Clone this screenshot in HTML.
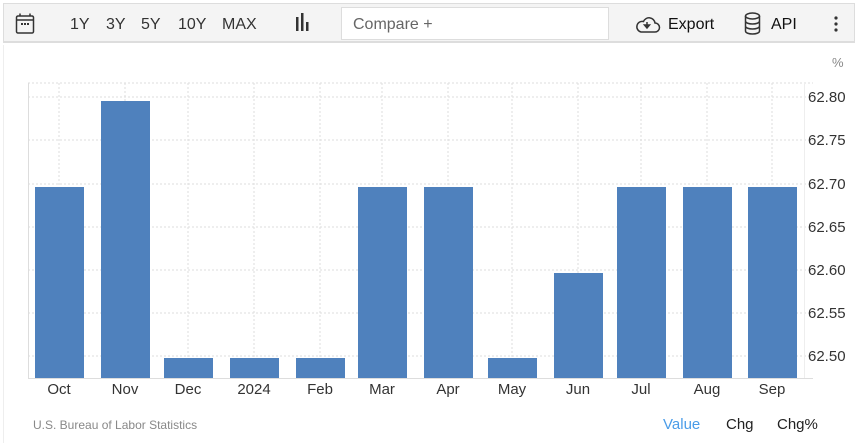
<!DOCTYPE html>
<html><head><style>
body{margin:0;width:857px;height:443px;background:#fff;font-family:"Liberation Sans",Arial,sans-serif;position:relative;overflow:hidden}
.tb{position:absolute;left:3px;top:3px;width:852px;height:40px;background:#f4f4f4;border:1px solid #ddd;border-bottom:2px solid #ddd;box-sizing:border-box}
.t{position:absolute;top:16px;font-size:16px;color:#333}
.cmp{position:absolute;left:341px;top:7px;width:268px;height:33px;background:#fff;border:1px solid #ddd;box-sizing:border-box;font-size:16px;color:#666;padding:8px 0 0 11px}
</style></head><body>
<div class="tb"></div>
<div style="position:absolute;left:3px;top:45px;width:1px;height:398px;background:#eee"></div>
<svg style="position:absolute;left:0;top:0" width="857" height="45">
<g fill="none" stroke="#333" stroke-width="1.5">
<rect x="16.5" y="16" width="17" height="17" rx="1.5"/><line x1="16.5" y1="20" x2="33.5" y2="20"/>
<line x1="20" y1="13.5" x2="20" y2="16"/><line x1="30" y1="13.5" x2="30" y2="16"/>
<path d="M641 32h14a4.5 4.5 0 0 0 0-9 6 6 0 0 0-11.5-1.5A5 5 0 0 0 641 32z"/>
<ellipse cx="752.5" cy="16" rx="7" ry="3"/><path d="M745.5 16v15c0 4 14 4 14 0V16M745.5 21c0 4 14 4 14 0M745.5 26c0 4 14 4 14 0"/>
</g>
<rect x="21" y="23" width="2" height="2" fill="#333"/><rect x="24" y="23" width="2" height="2" fill="#333"/><rect x="27" y="23" width="2" height="2" fill="#333"/>
<path d="M647 22v5M644.5 25l2.5 3 2.5-3z" stroke="#333" stroke-width="1.5" fill="#333"/>
<rect x="296" y="17" width="2.5" height="14" fill="#333"/><rect x="301" y="13" width="2.5" height="18" fill="#333"/><rect x="306" y="22" width="2.5" height="9" fill="#333"/>
<circle cx="836" cy="18" r="1.6" fill="#333"/><circle cx="836" cy="24" r="1.6" fill="#333"/><circle cx="836" cy="30" r="1.6" fill="#333"/>
</svg>
<div class="t" style="left:70px">1Y</div><div class="t" style="left:106px">3Y</div><div class="t" style="left:141px">5Y</div><div class="t" style="left:178px">10Y</div><div class="t" style="left:222px">MAX</div>
<div class="cmp">Compare +</div>
<div class="t" style="left:668px;color:#111">Export</div><div class="t" style="left:771px;color:#111">API</div>
<svg style="position:absolute;left:0;top:45px" width="857" height="398" font-family="Liberation Sans,Arial,sans-serif">
<g stroke="#ddd" stroke-dasharray="2,2" stroke-width="1">
<line x1="28" y1="38" x2="813" y2="38"/><line x1="28" y1="52" x2="813" y2="52"/><line x1="28" y1="95" x2="813" y2="95"/><line x1="28" y1="139" x2="813" y2="139"/><line x1="28" y1="182" x2="813" y2="182"/><line x1="28" y1="225" x2="813" y2="225"/><line x1="28" y1="268" x2="813" y2="268"/><line x1="28" y1="311" x2="813" y2="311"/>
<line x1="59" y1="38" x2="59" y2="333"/><line x1="125" y1="38" x2="125" y2="333"/><line x1="188" y1="38" x2="188" y2="333"/><line x1="254" y1="38" x2="254" y2="333"/><line x1="320" y1="38" x2="320" y2="333"/><line x1="382" y1="38" x2="382" y2="333"/><line x1="448" y1="38" x2="448" y2="333"/><line x1="512" y1="38" x2="512" y2="333"/><line x1="578" y1="38" x2="578" y2="333"/><line x1="641" y1="38" x2="641" y2="333"/><line x1="707" y1="38" x2="707" y2="333"/><line x1="772" y1="38" x2="772" y2="333"/>
</g>
<line x1="28.5" y1="38" x2="28.5" y2="333" stroke="#ddd"/><line x1="804.5" y1="38" x2="804.5" y2="333" stroke="#eee"/>
<line x1="28" y1="333.5" x2="813" y2="333.5" stroke="#ddd"/>
<g fill="#4f81bd">
<rect x="35" y="142" width="49" height="191"/><rect x="101" y="56" width="49" height="277"/><rect x="164" y="313" width="49" height="20"/><rect x="230" y="313" width="49" height="20"/><rect x="296" y="313" width="49" height="20"/><rect x="358" y="142" width="49" height="191"/><rect x="424" y="142" width="49" height="191"/><rect x="488" y="313" width="49" height="20"/><rect x="554" y="228" width="49" height="105"/><rect x="617" y="142" width="49" height="191"/><rect x="683" y="142" width="49" height="191"/><rect x="748" y="142" width="49" height="191"/>
</g>
<g font-size="15" fill="#333">
<text x="808" y="57">62.80</text><text x="808" y="100">62.75</text><text x="808" y="144">62.70</text><text x="808" y="187">62.65</text><text x="808" y="230">62.60</text><text x="808" y="273">62.55</text><text x="808" y="316">62.50</text>
</g>
<text x="832" y="22" font-size="13" fill="#888">%</text>
<g font-size="15" fill="#333" text-anchor="middle">
<text x="59" y="349">Oct</text><text x="125" y="349">Nov</text><text x="188" y="349">Dec</text><text x="254" y="349">2024</text><text x="320" y="349">Feb</text><text x="382" y="349">Mar</text><text x="448" y="349">Apr</text><text x="512" y="349">May</text><text x="578" y="349">Jun</text><text x="641" y="349">Jul</text><text x="707" y="349">Aug</text><text x="772" y="349">Sep</text>
</g>
<text x="33" y="384" font-size="12" fill="#888">U.S. Bureau of Labor Statistics</text>
<g font-size="15"><text x="663" y="384" fill="#4a9ce8">Value</text><text x="726" y="384" fill="#222">Chg</text><text x="777" y="384" fill="#222">Chg%</text></g>
</svg>
</body></html>
